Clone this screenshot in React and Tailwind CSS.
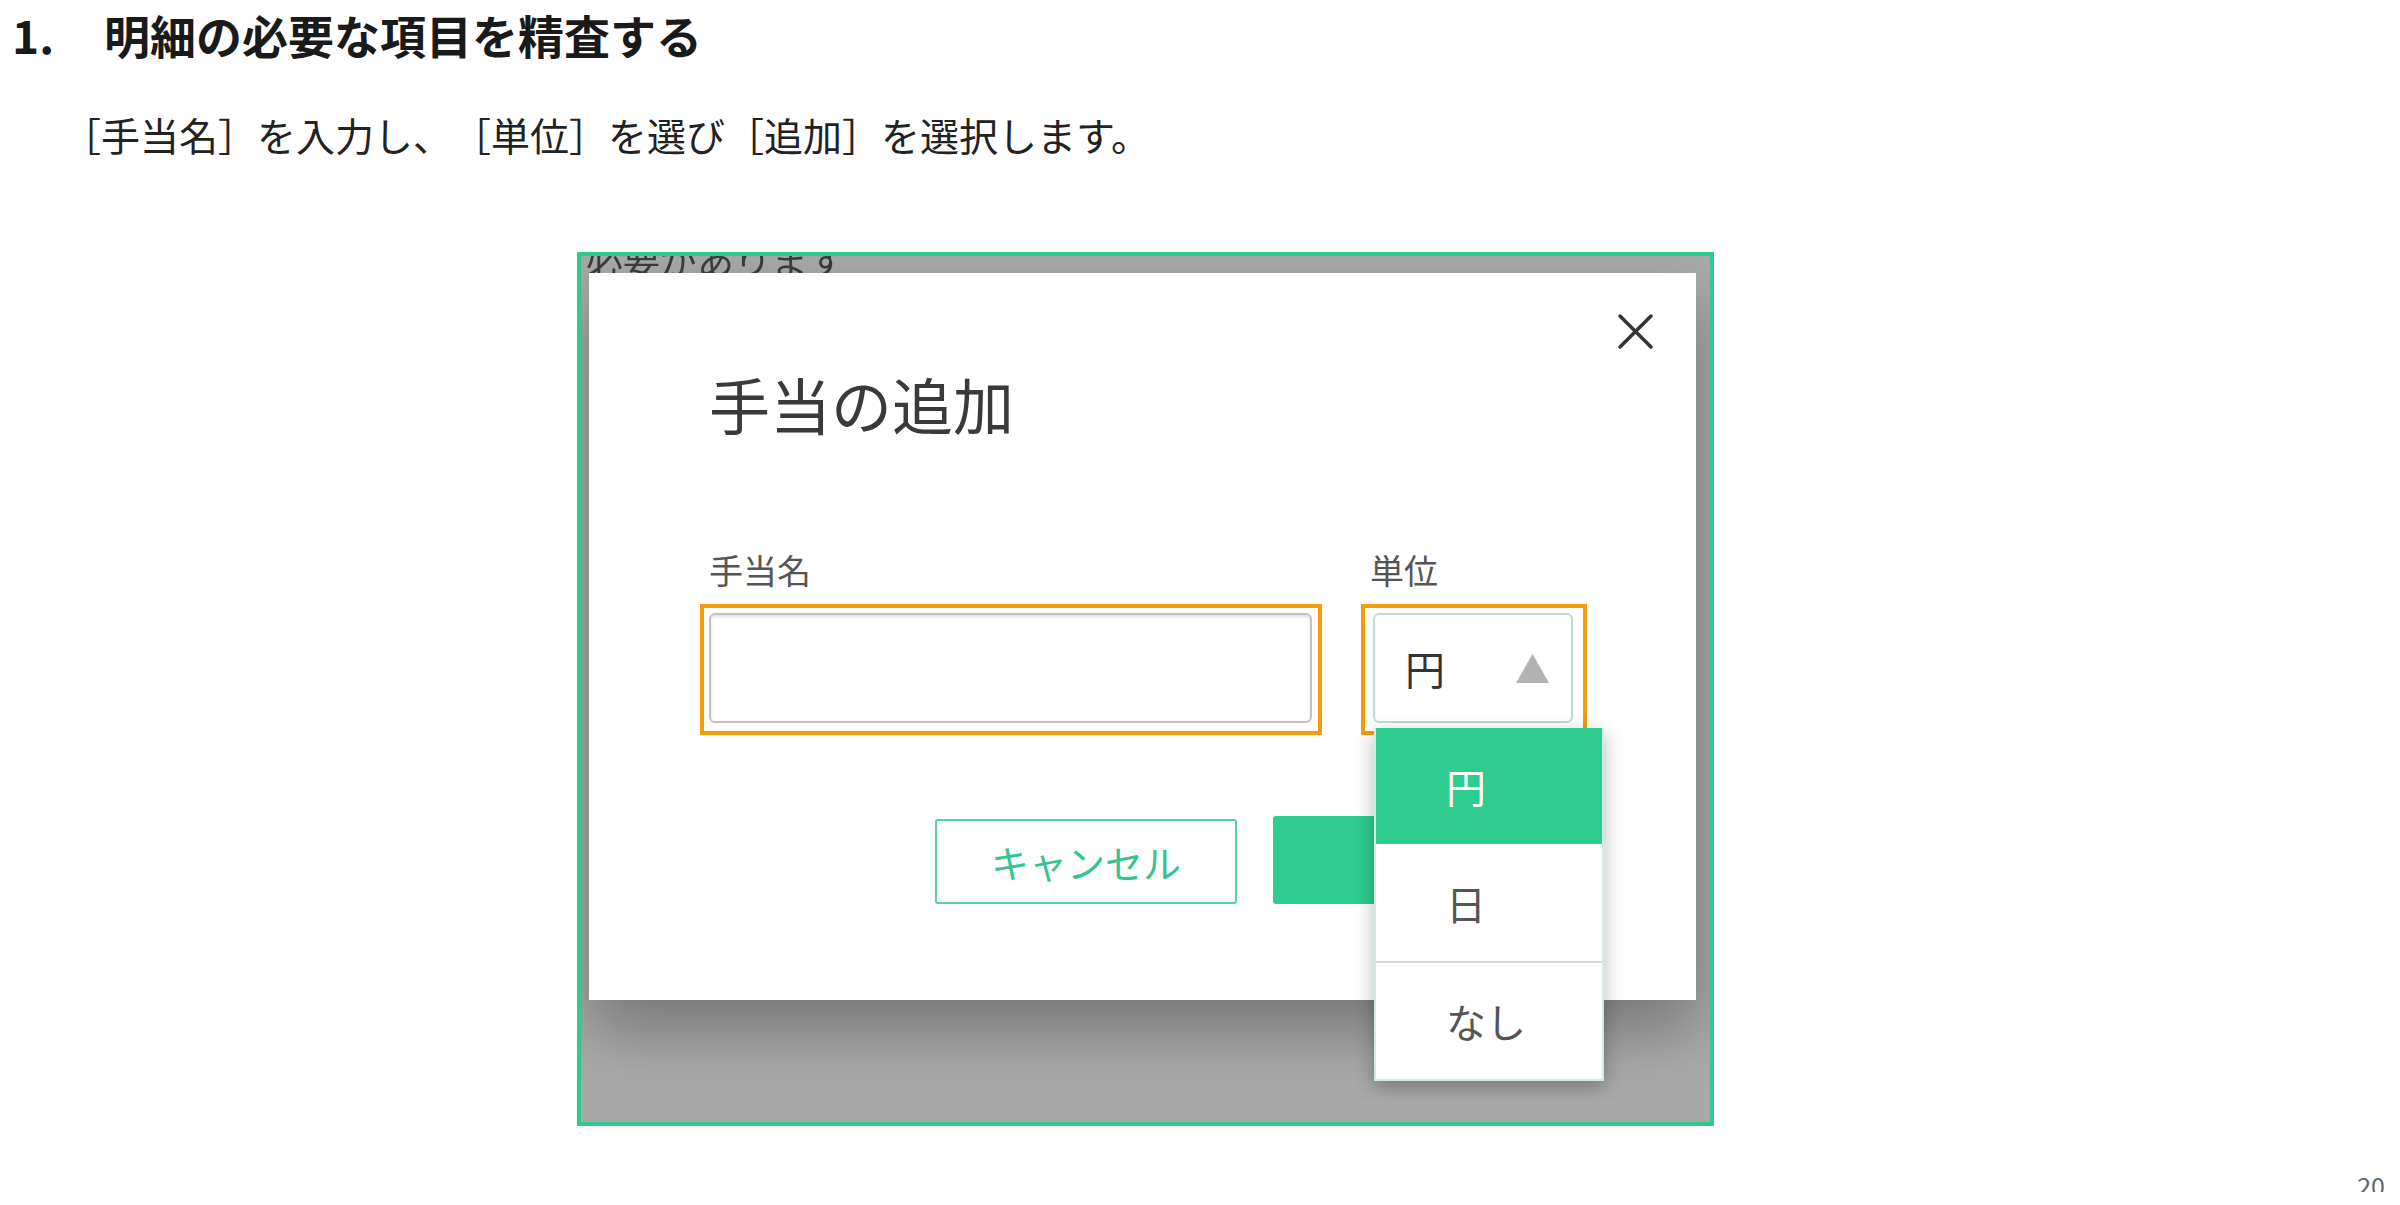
import React from 'react';

const jp = { fontFamily: '"Noto Sans CJK JP", "Noto Sans", sans-serif' };

function CloseIcon() {
  return (
    <svg width="37" height="37" viewBox="0 0 37 37">
      <path d="M3 3 L34 34 M34 3 L3 34" stroke="#333" strokeWidth="3.5" strokeLinecap="round" />
    </svg>
  );
}

function Dropdown() {
  return (
    <div className="absolute left-[785px] top-[455px] w-[230px] bg-white shadow-[0_6px_18px_rgba(0,0,0,0.28)] border-2 border-t-0 border-[#cdeee1]">
      <div className="h-[116px] flex items-center pl-[70px] bg-[#2ecc8f] text-white text-[40px]">円</div>
      <div className="h-[119px] flex items-center pl-[70px] text-[#555] text-[40px] border-b-2 border-[#d9d9d9]">日</div>
      <div className="h-[116px] flex items-center pl-[70px] text-[#555] text-[40px]">なし</div>
    </div>
  );
}

function Modal() {
  return (
    <div className="relative ml-[8px] w-[1107px] h-[727px] bg-white shadow-[0_30px_60px_rgba(0,0,0,0.3)]">
      <div className="flex justify-end pt-[40px] pr-[42px]">
        <CloseIcon />
      </div>
      <div className="mt-[18px] pl-[120px] text-[61px] leading-[72px] text-[#3a3a3a]">手当の追加</div>

      <div className="mt-[110px] pl-[111px] flex gap-[39px]">
        <div>
          <div className="pl-[9px] text-[34px] leading-[40px] text-[#555]">手当名</div>
          <div className="mt-[14px] border-4 border-[#f79a0c] pt-[5px] pb-[8px] pl-[5px] pr-[6px]">
            <div className="w-[603px] h-[110px] rounded-[6px] border-2 border-[#c2c2c2] bg-white shadow-[inset_0_2px_3px_rgba(0,0,0,0.12)]" />
          </div>
        </div>
        <div>
          <div className="pl-[9px] text-[34px] leading-[40px] text-[#555]">単位</div>
          <div className="mt-[14px] border-4 border-[#f79a0c] pt-[5px] pb-[8px] pl-[8px] pr-[10px]">
            <div className="w-[200px] h-[110px] rounded-[6px] border-2 border-[#b9ddcf] bg-white flex items-center pl-[30px] gap-[70px]">
              <span className="text-[40px] text-[#333]">円</span>
              <svg width="35" height="31" viewBox="0 0 35 31">
                <polygon points="17.5,1 34,30 1,30" fill="#b3b3b3" />
              </svg>
            </div>
          </div>
        </div>
      </div>

      <div className="mt-[81px] pl-[346px] flex items-end gap-[36px]">
        <div className="w-[302px] h-[85px] border-2 border-[#5ccfa4] rounded-[3px] flex items-center justify-center text-[38px] text-[#35c48f]">
          キャンセル
        </div>
        <div className="w-[302px] h-[88px] bg-[#2ecc8f] rounded-[3px]" />
      </div>

      <Dropdown />
    </div>
  );
}

export default function App() {
  return (
    <div className="w-[2400px] h-[1205px] bg-white overflow-hidden" style={jp}>
      <div className="pt-[10px] pl-[12px] flex text-[46px] leading-[48px] font-bold text-[#1a1a1a]">
        <span className="w-[92px]">1.</span>
        <span>明細の必要な項目を精査する</span>
      </div>
      <div className="mt-[52px] pl-[62px] text-[39px] leading-[48px] text-[#222] [text-spacing-trim:space-all]">
        ［手当名］を入力し、［単位］を選び［追加］を選択します。
      </div>

      <div className="mt-[94px] ml-[577px] w-[1137px] h-[874px] border-4 border-[#2ecb8e] bg-[#a9a9a9] overflow-hidden">
        <div className="h-[17px] overflow-hidden pl-[5px]">
          <div className="-mt-[15px] text-[37px] leading-[37px] text-[#3c3c3c] blur-[0.7px]">必要があります</div>
        </div>
        <Modal />
      </div>

      <div className="mt-[47px] h-[19px] overflow-hidden flex justify-end pr-[15px]">
        <span className="text-[25px] leading-[25px] text-[#666]">20</span>
      </div>
    </div>
  );
}
